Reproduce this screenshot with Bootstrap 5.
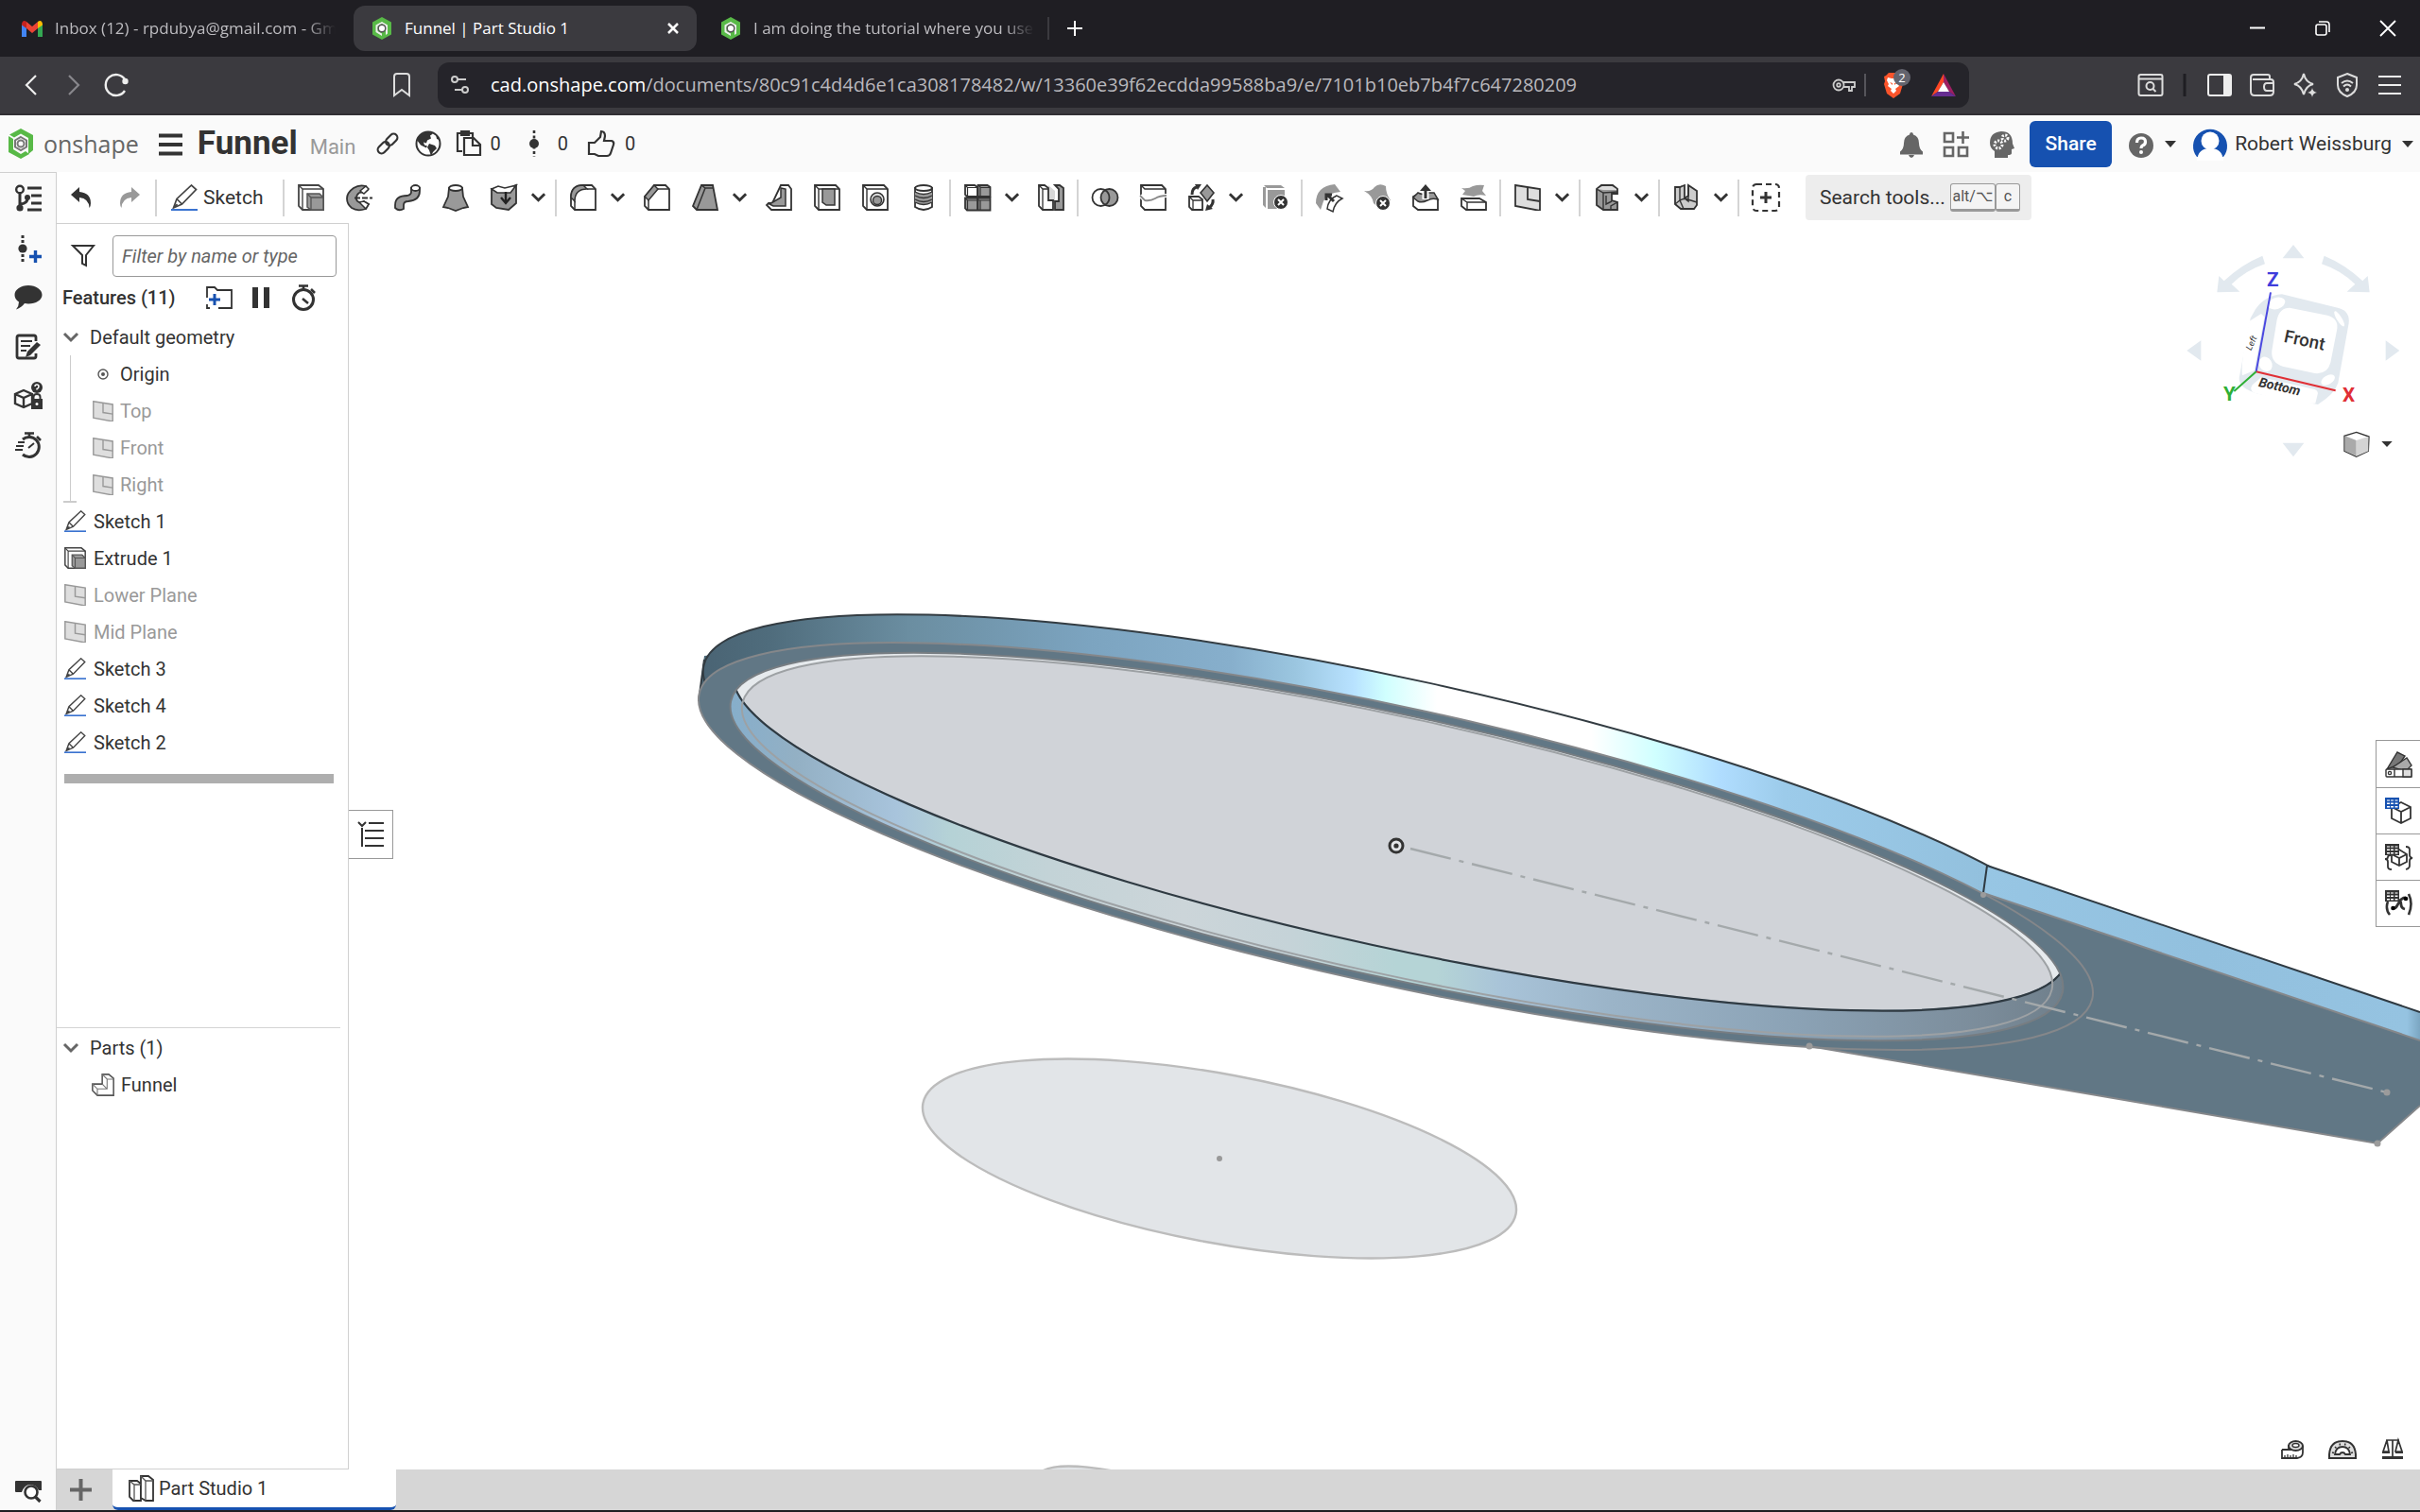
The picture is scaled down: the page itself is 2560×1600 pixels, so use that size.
<!DOCTYPE html>
<html lang="en">
<head>
<meta charset="utf-8">
<meta name="viewport" content="width=device-width, initial-scale=1">
<title>Funnel | Part Studio 1</title>
<link rel="stylesheet" href="https://cdn.jsdelivr.net/npm/bootstrap@5.3.0/dist/css/bootstrap.min.css">
<script src="https://cdn.jsdelivr.net/npm/bootstrap@5.3.0/dist/js/bootstrap.bundle.min.js"></script>
<style>
body{font-family:Roboto,"Liberation Sans",sans-serif;font-size:20px;line-height:24px;color:#333;background:#fff}
button{font:inherit;color:inherit;background:none;border:0;padding:0}
a{color:inherit;text-decoration:none}
svg{display:block;flex:none;overflow:visible}
.ic{width:28px;height:28px}
.hold{display:flex;align-items:center;justify-content:center;flex:none}
/* browser chrome */
.chrome-ui{font-family:"Open Sans","Noto Sans",sans-serif}
.tabstrip{height:60px;background:#1f1e23;color:#bdbcc0;font-size:17px;padding-left:22px}
.btab{height:48px;flex:none}
.btab.first{width:352px}
.btab.last{width:371px}
.btab.on{width:363px;background:#3b3a3f;border-radius:12px;color:#fff;padding:0 16px 0 18px}
.fade-end{width:297px;white-space:nowrap;overflow:hidden;-webkit-mask-image:linear-gradient(90deg,#000 calc(100% - 32px),transparent);mask-image:linear-gradient(90deg,#000 calc(100% - 32px),transparent)}
.fav{width:24px;height:24px}
.winctl{width:69px;height:60px}
.navrow{height:62px;background:#3b3a3f;color:#eee;border-bottom:2px solid #312f34;padding:0 10px}
.navgap{width:257px;flex:none}
.nbtn{width:45px;height:48px}
.urlbar{width:1620px;height:48px;background:#25242a;border-radius:12px;font-size:20px;color:#b9b8bd;padding:0 13px 0 12px}
.urlbar b{font-weight:400;color:#fff}
.vr1{width:2px;height:24px;flex:none;background:#55545a}
/* application header */
.apphead{height:60px;background:#fafafa}
.brand{font-family:"Open Sans",sans-serif;font-size:25px;color:#666;margin-left:9px}
.doc{font-size:35px;font-weight:700;line-height:40px}
.ws{font-size:22px;color:#999}
.share{width:87px;height:49px;background:#1651b0;color:#fff;border-radius:6px;font-weight:500;font-size:21px}
.tri{width:0;border:6px solid transparent;border-top:7px solid #333;border-bottom:0}
/* toolbar */
.toolrow{height:54px;font-size:21px}
.tb{width:51px;height:54px}
.cv{width:27px;height:54px;padding-right:4px!important}
.sp{width:6px;flex:none}
.sp::before{content:"";display:block;width:2px;height:39px;margin:0 auto;background:#d4d4d4}
.searchbox{width:239px;height:48px;background:#ededed;border-radius:4px;margin-left:17px;padding-left:15px;white-space:nowrap}
.keycap{display:block;width:26px;height:30px;border:1px solid #999;border-bottom-width:3px;border-radius:3px;font-family:Roboto,"DejaVu Sans",sans-serif;font-size:16px;line-height:26px;padding:0;background:#f4f4f4;color:#555;text-align:center}
.keycap.wide{width:48px;margin-left:5px}
/* side rail and feature panel */
.rail{width:60px;flex:none;background:#fafafa;border-top:1px solid #d0d0d0;border-right:1px solid #d0d0d0}
.rail button{height:52px;width:60px}
.rail button:first-child{height:54px}
.feat{width:309px;flex:none;background:#fff;border:1px solid #d0d0d0;border-left:0}
.filt{height:44px;width:237px;border:1px solid #999;border-radius:4px;padding:0 9px;color:#333;margin-left:19px}
.filt::placeholder{color:#666;font-style:italic;opacity:1}
.frow{height:39px;display:flex;align-items:center;width:100%;white-space:nowrap;padding-left:8px}
.frow.fold{padding-left:6px;gap:11px}
.frow.sub{padding-left:23px;gap:7px}
.off{color:#999}
.kids{margin-left:14px;border-left:1px solid #ccc;position:relative}
.kids::after{content:"";position:absolute;left:-8px;bottom:0;width:14px;height:2px;background:#ccc}
.rollback{height:10px;background:#aeaeae;margin:14px 15px 0 8px}
.parts{height:467px;flex:none;padding-top:2px}
.parts::before{content:"";display:block;height:1px;margin:-2px 8px 1px 0;background:#d4d4d4}
.stage{min-width:0;background:#fff}
.scene{width:100%;height:100%}
.listtab{left:0;top:621px;width:47px;height:52px;background:#fff;border:1px solid #999;border-left:0}
.cubebox{right:0;top:4px;width:320px;height:260px}
.sidebtns{right:0;top:547px;width:47px;border:1px solid #999;border-right:0;background:#fff}
.sidebtns button{height:49px;width:46px}
.sidebtns button+button{border-top:1px solid #999}
.measures{right:3px;bottom:3px}
.measures button{width:53px;height:36px}
.bottombar{height:43px;background:#d6d6d6}
.addtab{width:59px;padding-right:9px}
.ptab{width:300px;background:#fff;border-bottom:3px solid #1651b0;border-radius:0 0 6px 6px;padding-left:17px}
.edge{height:2px;background:#1f1e23}
</style>
</head>
<body class="d-flex flex-column vh-100 overflow-hidden">

<svg width="0" height="0" class="position-absolute" aria-hidden="true">
<defs>
<symbol id="logo" viewBox="0 0 30 32"><path fill="#58b947" d="M15 0 28 7v16l-5 4V10L15 5.500 8 9.500 3 6.500zM2 8l5 3v11l8 5 5-3 4 3-9 5L2 25z"/><path fill="none" stroke="#777" stroke-width="2" d="M15 9l6 3.500v7L15 23l-6-3.500v-7z"/><circle cx="15" cy="16" r="3.500" fill="none" stroke="#777" stroke-width="2"/></symbol>
<symbol id="fav" viewBox="0 0 24 24"><path fill="#58b947" d="M12 0 22 5.500v13L12 24 2 18.500v-13z"/><path fill="#eee" d="M12 5l6 3.500v9L16 19V9.500L12 7 7.500 9.500V15L12 17.500V20L5.500 16V8.500z"/><circle cx="12" cy="12" r="3.800" fill="#fff" stroke="#555" stroke-width="1.500"/></symbol>
<symbol id="chev" viewBox="0 0 18 12"><path d="M2 2l7 7 7-7" fill="none" stroke="currentColor" stroke-width="3"/></symbol>
<symbol id="pen" viewBox="0 0 28 28"><path d="M2.500 25L6 15.500 21.500 1l5 4.500L11.500 21zM6 15.500l5.500 5.500M2.500 25l4-4" fill="#fff" stroke="#444" stroke-width="1.700"/><path d="M0 27h28" stroke="#3a73d0" stroke-width="2"/></symbol>
<symbol id="plane" viewBox="0 0 28 28"><path d="M1 1l26 4v23L1 23z" fill="#dedede" stroke="currentColor" stroke-width="1.800"/><path d="M14 3v13l13 2" fill="none" stroke="currentColor" stroke-width="1.800"/></symbol>
<symbol id="extrude" viewBox="0 0 28 28"><path d="M1 1h21l5 4v22H5l-4-4z" fill="#fff" stroke="#444" stroke-width="1.800"/><path d="M1 1l4 4h22M5 5v22" fill="none" stroke="#444" stroke-width="1.400"/><path d="M10 10h13l4 4v13H14l-4-3z" fill="#999" stroke="#555" stroke-width="1.500"/><path d="M10 10l4 4h13M14 14v13" fill="none" stroke="#555" stroke-width="1.300"/></symbol>
<symbol id="xcirc" viewBox="0 0 16 16"><circle cx="8" cy="8" r="7.500" fill="#333" stroke="#fff" stroke-width="1"/><path d="M5 5l6 6M11 5l-6 6" stroke="#fff" stroke-width="2"/></symbol>
<symbol id="table" viewBox="0 0 15 12"><path d="M0 0h15v12H0z" fill="currentColor"/><path d="M2 2h3v2H2zM6 2h3v2H6zM10.500 2h3v2h-3z" fill="#fff" opacity=".55"/><path d="M2 5.500h3v1.500H2zM6 5.500h3v1.500H6zM10.500 5.500h3v1.500h-3zM2 9h3v1.500H2zM6 9h3v1.500H6zM10.500 9h3v1.500h-3z" fill="#fff"/></symbol>
</defs>
</svg>

<!-- browser tab strip -->
<header class="chrome-ui">
<nav class="tabstrip d-flex align-items-center" aria-label="Browser tabs">
  <a href="#" class="btab first d-flex align-items-center gap-2">
    <svg class="fav me-1" viewBox="0 0 24 24"><path fill="#4285f4" d="M1 21V7l5 4v10z"/><path fill="#34a853" d="M18 21V11l5-4v14z"/><path fill="#c5221f" d="M1 8c0-4 3-5 5-3v7L1 8.500z"/><path fill="#fbbc04" d="M23 8c0-4-3-5-5-3v7l5-3.500z"/><path fill="#ea4335" d="M6 5l6 5 6-5v7l-6 5-6-5z"/></svg>
    <span class="fade-end">Inbox (12) - rpdubya@gmail.com - Gmail</span></a>
  <a href="#" class="btab on d-flex align-items-center">
    <svg class="fav"><use href="#fav"/></svg><span class="flex-grow-1 ms-2 ps-1">Funnel | Part Studio 1</span>
    <button aria-label="Close tab"><svg width="18" height="18" viewBox="0 0 18 18"><path d="M4 4l10 10M14 4L4 14" stroke="#fff" stroke-width="2.500"/></svg></button></a>
  <a href="#" class="btab last d-flex align-items-center gap-2 ps-4">
    <svg class="fav me-1"><use href="#fav"/></svg><span class="fade-end">I am doing the tutorial where you used</span></a>
  <span class="vr1" style="background:#3b3a3f"></span>
  <button class="hold ms-3" aria-label="New tab"><svg width="22" height="16" viewBox="0 0 22 16"><path d="M11 0v16M3 8h16" stroke="#fff" stroke-width="2"/></svg></button>
  <span class="flex-grow-1"></span>
  <button class="winctl hold" aria-label="Minimize"><svg width="16" height="16" viewBox="0 0 16 16"><path d="M0 7.500h16" stroke="#fff" stroke-width="2"/></svg></button>
  <button class="winctl hold" aria-label="Restore"><svg width="16" height="16" viewBox="0 0 16 16"><rect x="1" y="4" width="11" height="11" rx="2" fill="none" stroke="#fff" stroke-width="1.600"/><path d="M4 1h8q3 0 3 3v8" fill="none" stroke="#fff" stroke-width="1.600"/></svg></button>
  <button class="winctl hold" aria-label="Close"><svg width="16" height="16" viewBox="0 0 16 16"><path d="M0 0l16 16M16 0L0 16" stroke="#fff" stroke-width="1.800"/></svg></button>
</nav>

<!-- navigation bar -->
<div class="navrow d-flex align-items-center">
  <div class="d-flex">
  <button class="nbtn hold" aria-label="Back"><svg width="14" height="22" viewBox="0 0 14 22"><path d="M12 1L2 11l10 10" fill="none" stroke="#eee" stroke-width="2.200"/></svg></button>
  <button class="nbtn hold" aria-label="Forward"><svg width="14" height="22" viewBox="0 0 14 22"><path d="M2 1l10 10L2 21" fill="none" stroke="#88878c" stroke-width="2.200"/></svg></button>
  <button class="nbtn hold" aria-label="Reload"><svg width="26" height="26" viewBox="0 0 26 26"><path d="M22 7A11 11 0 1 0 22 19" fill="none" stroke="#eee" stroke-width="2.400"/><circle cx="22.500" cy="9" r="3.200" fill="#eee"/></svg></button>
  </div>
  <span class="navgap"></span>
  <button class="nbtn hold me-3" aria-label="Bookmark"><svg width="20" height="26" viewBox="0 0 20 26"><path d="M2 4q0-3 3-3h10q3 0 3 3v20l-8-6-8 6z" fill="none" stroke="#ddd" stroke-width="2"/></svg></button>
  <div class="urlbar d-flex align-items-center">
    <svg width="24" height="24" viewBox="0 0 24 24"><g fill="none" stroke="#ccc" stroke-width="2"><circle cx="6" cy="6" r="3"/><path d="M9 6h9M6 17h8"/><circle cx="17" cy="17" r="3"/></g></svg>
    <span class="flex-grow-1 ms-3 ps-1"><b>cad.onshape.com</b>/documents/80c91c4d4d6e1ca308178482/w/13360e39f62ecdda99588ba9/e/7101b10eb7b4f7c647280209</span>
    <svg width="26" height="18" viewBox="0 0 26 18"><g fill="none" stroke="#ccc" stroke-width="1.800"><circle cx="7" cy="9" r="5.500"/><circle cx="7" cy="9" r="1.800"/><path d="M12 6h12v5h-3v4h-3v-4h-6"/></g></svg>
    <span class="vr1 ms-2 me-3"></span>
    <svg class="me-4" width="28" height="28" viewBox="0 0 28 28"><path fill="#fb542b" d="M8 1h10l3 3 2 1-1 5 1 3-3 10-7 5-7-5L3 13l1-3-1-5 2-1z"/><path fill="#fff" d="M7 6l4 1h4l4-1 1 3-2 4 1 2-4 3 1 2-3 3-3-3 1-2-4-3 1-2-2-4z"/><path fill="#fb542b" d="M9 11l3 1v2zM17 11l-3 1v2z"/><circle cx="22" cy="6" r="9" fill="#63646e"/><text x="22" y="11" font-size="13" fill="#fff" text-anchor="middle">2</text></svg>
    <svg width="28" height="24" viewBox="0 0 28 24"><path fill="#ff4724" d="M14 0v9L8 19 1 24z"/><path fill="#9e1f63" d="M14 0l13 24-7-5-6-10z"/><path fill="#662d91" d="M1 24l7-5h12l7 5z"/><path fill="#fff" d="M14 9l6 10H8z"/></svg>
  </div>
  <span class="flex-grow-1"></span>
  <div class="d-flex align-items-center">
  <button class="nbtn hold" aria-label="Search tabs"><svg class="ic" viewBox="0 0 28 28"><g fill="none" stroke="#ddd" stroke-width="2"><rect x="1.500" y="3" width="25" height="22" rx="2"/><path d="M2 7.500h24"/><circle cx="13.500" cy="15" r="4"/><path d="M16.500 18l3 3"/></g></svg></button>
  <svg width="28" height="24" viewBox="0 0 28 24"><path d="M14 0v24" stroke="#1f1e23" stroke-width="3"/></svg>
  <button class="nbtn hold" aria-label="Sidebar"><svg width="26" height="24" viewBox="0 0 26 24"><rect x="1" y="1" width="24" height="22" rx="2" fill="none" stroke="#eee" stroke-width="2"/><path fill="#eee" d="M17 1h8v22h-8z"/></svg></button>
  <button class="nbtn hold" aria-label="Wallet"><svg width="26" height="24" viewBox="0 0 26 24"><g fill="none" stroke="#ddd" stroke-width="2"><path d="M21 5V3q0-2-2-2H4Q1 1 1 4v15q0 4 4 4h16q4 0 4-4V9q0-3-3-3H3M25 10h-7q-3 0-3 4t3 4h7"/></g></svg></button>
  <button class="nbtn hold" aria-label="AI assistant"><svg width="26" height="26" viewBox="0 0 26 26"><path d="M12 1q2 9 10 11-8 2-10 11-2-9-10-11 8-2 10-11z" fill="none" stroke="#ddd" stroke-width="2"/><path d="M21 16q.5 4 5 5-4.500.5-5 5-.5-4.500-5-5 4.500-1 5-5z" fill="#ddd"/></svg></button>
  <button class="nbtn hold" aria-label="VPN"><svg width="24" height="28" viewBox="0 0 24 28"><g fill="none" stroke="#ddd" stroke-width="2"><path d="M12 2l10 4v8q0 8-10 12Q2 22 2 14V6z"/><path d="M6 12q6-5 12 0M8 15.500q4-4 8 0"/></g><circle cx="12" cy="19" r="2" fill="#ddd"/></svg></button>
  <button class="nbtn hold" aria-label="Menu"><svg width="24" height="20" viewBox="0 0 24 20"><path d="M0 1h24M0 10h24M0 19h24" stroke="#eee" stroke-width="2"/></svg></button>
  </div>
</div>
</header>

<!-- document header -->
<div class="apphead d-flex align-items-center flex-shrink-0">
  <a href="#" class="d-flex align-items-center" style="margin-left:7px"><svg width="30" height="32"><use href="#logo"/></svg><span class="brand">onshape</span></a>
  <button style="margin-left:21px" aria-label="Document menu"><svg width="25" height="24" viewBox="0 0 25 24"><path d="M0 3.500h25M0 13h25M0 22.500h25" stroke="#333" stroke-width="4"/></svg></button>
  <span class="d-flex align-items-baseline ms-3"><span class="doc">Funnel</span><span class="ws" style="margin-left:13px">Main</span></span>
  <button style="margin-left:21px" aria-label="Link"><svg width="26" height="26" viewBox="0 0 26 26"><g fill="none" stroke="#333" stroke-width="2.200" transform="rotate(-45 13 13)"><rect x="0" y="9" width="14" height="8" rx="4"/><rect x="12" y="9" width="14" height="8" rx="4"/></g></svg></button>
  <button class="ms-3" aria-label="Public"><svg class="ic" viewBox="0 0 28 28"><circle cx="14" cy="14" r="12.500" fill="#fff" stroke="#333" stroke-width="2"/><path fill="#333" d="M3 8Q8 1 15 1.500l4 2-3 2 1 3-4 2-1 3-3-1 1 3 3 1-1 2-6-3-3-4zM15 14l6 2 2 3-4 4-2 4-2-6-2-3zM22 4l4 6-3-1z"/></svg></button>
  <button class="d-flex align-items-center" style="margin-left:15px" aria-label="Copies 0"><svg class="ic" viewBox="0 0 28 28"><g fill="none" stroke="#333" stroke-width="2.200"><path d="M7 22H2V3h16v4M6 1h8v4H6z"/><path d="M9 8h10l7 7v11H9zM18 8v8h8" fill="#fafafa"/></g></svg><span class="ms-2">0</span></button>
  <button class="d-flex align-items-center" style="margin-left:21px" aria-label="Versions 0"><svg class="ic" viewBox="0 0 28 28"><path d="M14 0v28" stroke="#333" stroke-width="2.600" stroke-dasharray="3 2.500"/><circle cx="14" cy="14" r="5" fill="#333"/></svg><span style="margin-left:11px">0</span></button>
  <button class="d-flex align-items-center" style="margin-left:21px" aria-label="Likes 0"><svg class="ic" viewBox="0 0 28 28"><path d="M1 13h6l6-6 1-6q4 0 4 5l-1 5h8q3 1 2 4l-3 9q-1 3-4 3h-9l-4-2H1z" fill="none" stroke="#333" stroke-width="2.200"/></svg><span style="margin-left:11px">0</span></button>
  <span class="flex-grow-1"></span>
  <button class="hold" style="width:47px" aria-label="Notifications"><svg class="ic" viewBox="0 0 28 28"><path fill="#666" d="M14 2q2 0 2 2.500 6 2 6 9 0 6 4 9v3H2v-3q4-3 4-9 0-7 6-9Q12 2 14 2zM11 26h6q-1 3-3 3t-3-3z"/></svg></button>
  <button class="hold" style="width:48px" aria-label="Apps"><svg width="28" height="30" viewBox="0 -2 28 30"><g fill="none" stroke="#666" stroke-width="2.600"><path d="M2 2h9v9H2zM2 17h9v9H2zM17 17h9v9h-9zM21.500 0v13M15 6.500h13"/></g></svg></button>
  <button class="hold" style="width:48px" aria-label="Learning"><svg width="28" height="30" viewBox="0 -2 28 30"><path fill="#666" d="M14 0q12 0 12 13l2 5-3 1v4q0 2-4 2v3H7v-7Q2 18 2 12 2 1 14 0z"/><g fill="none" stroke="#fafafa" stroke-width="3" stroke-dasharray="2 1.500"><circle cx="11" cy="14" r="4"/><circle cx="18" cy="7" r="3"/></g></svg></button>
  <button class="share" style="margin-left:6px">Share</button>
  <button class="d-flex align-items-center" style="margin-left:17px" aria-label="Help"><svg class="ic" viewBox="0 0 28 28"><circle cx="14" cy="16" r="13" fill="#666"/><path d="M9.500 13q0-5 4.500-5t4.500 4q0 3-3 4-1.500.7-1.500 3" fill="none" stroke="#fff" stroke-width="3.200"/><circle cx="14" cy="23" r="2" fill="#fff"/></svg><span class="tri" style="margin-left:11px"></span></button>
  <button class="d-flex align-items-center" style="margin-left:18px"><svg width="36" height="36" viewBox="0 0 36 36"><path fill="#1651b0" d="M4 32A18 18 0 1 1 32 32z"/><circle cx="18" cy="15" r="9.500" fill="#fff"/><path fill="#fff" d="M4 36q1-13 14-13t14 13z"/></svg><span class="ms-2" style="font-size:21px">Robert Weissburg</span><span class="tri" style="margin:0 7px 0 11px"></span></button>
</div>

<div class="d-flex flex-grow-1" style="min-height:0">
<!-- left rail -->
<nav class="rail d-flex flex-column" aria-label="Panels">
  <button class="hold" aria-label="Feature list"><svg class="ic" viewBox="0 0 28 28"><g fill="none" stroke="#333"><circle cx="5" cy="4.500" r="3.800" stroke-width="2.400"/><path d="M5 9v12M6 20q7-1 7-6" stroke-width="3"/><path d="M13 3h15M17 11h11M17 19h11M13 26h15" stroke-width="3"/></g><circle cx="5" cy="24" r="3.600" fill="#333"/><circle cx="13" cy="13" r="3" fill="#333"/></svg></button>
  <button class="hold" aria-label="Create version"><svg class="ic" viewBox="0 0 28 28"><path d="M8 0v28" stroke="#333" stroke-width="3" stroke-dasharray="3 2"/><circle cx="8" cy="14" r="4.600" fill="#333"/><path d="M21.500 16v13M15 22.500h13" stroke="#1651b0" stroke-width="3.400"/></svg></button>
  <button class="hold" aria-label="Comments"><svg class="ic" viewBox="0 0 28 28"><path fill="#333" d="M14 1c8 0 14.500 4.500 14.500 10S22 20.500 14 20.500l-4-.5Q7 24 1 26.500 4 23 4 18.500-.5 16-.5 11C-.5 5.500 6 1 14 1z"/></svg></button>
  <button class="hold" aria-label="Notes"><svg class="ic" viewBox="0 0 28 28"><g fill="none" stroke="#333"><path d="M22 8V4q0-2-2-2H4Q2 2 2 4v20q0 2 2 2h16q2 0 2-2v-3" stroke-width="2.800"/><path d="M6 8h12M6 13h10M6 18h6" stroke-width="2.200"/></g><path fill="#333" d="M23 9l4 3-11 11-5 2 2-6z"/></svg></button>
  <button class="hold" aria-label="Properties"><svg width="30" height="30" viewBox="0 0 30 30"><path d="M10 9l9 4v10l-9 4-9-4V13zM1 13l9 4 9-4M10 17v10" fill="none" stroke="#333" stroke-width="2.400"/><circle cx="24" cy="6" r="6" fill="#333"/><path d="M22 5q0-2 2-2t2 2-2 2.500v1" stroke="#fff" stroke-width="1.500" fill="none"/><path d="M18 18h12v11H18z" fill="#333"/><path d="M20.500 18v-2q0-3 3.500-3t3.500 3v2" fill="none" stroke="#333" stroke-width="2"/><circle cx="24" cy="23.500" r="1.500" fill="#fff"/></svg></button>
  <button class="hold" aria-label="Performance"><svg class="ic" viewBox="0 0 28 28"><path d="M8 8A10.500 10.500 0 1 1 8 24" fill="none" stroke="#333" stroke-width="3"/><path d="M10 1.500h10M15 2v4M23 5l4 4" stroke="#333" stroke-width="2.600"/><path d="M3 11h7M1 15h8M0 19h8M14 17l6-5" stroke="#333" stroke-width="2"/></svg></button>
  <span class="flex-grow-1"></span>
  <button class="hold" style="height:40px" aria-label="Search"><svg width="28" height="24" viewBox="0 0 28 24"><path fill="#333" d="M1 1h26q1 0 1 1v9h-3q-3-6-9-6t-9 8H1q-1 0-1-1V2q0-1 1-1z"/><circle cx="17" cy="13" r="6.500" fill="#fff" stroke="#333" stroke-width="2.600"/><path d="M21.500 18l5 5" stroke="#333" stroke-width="3.200"/></svg></button>
</nav>

<div class="d-flex flex-column flex-grow-1" style="min-width:0">
<!-- feature toolbar -->
<div class="toolrow d-flex align-items-center flex-shrink-0" role="toolbar">
  <button class="tb hold" aria-label="Undo"><svg width="22" height="24" viewBox="0 0 22 24"><path fill="#333" d="M0 9l9-8v5q12 1 12 12 0 3-1.500 5Q19 13 9 12v5z"/></svg></button>
  <button class="tb hold" aria-label="Redo"><svg width="22" height="24" viewBox="0 0 22 24"><path fill="#999" d="M22 9l-9-8v5Q1 7 1 18q0 3 1.500 5Q3 13 13 12v5z"/></svg></button>
  <span class="sp"></span>
  <button class="d-flex align-items-center flex-shrink-0" style="width:129px;padding-left:13px"><svg class="ic"><use href="#pen"/></svg><span style="margin-left:6px">Sketch</span></button>
  <span class="sp"></span>
  <button class="tb hold" aria-label="Extrude"><svg class="ic"><use href="#extrude"/></svg></button>
  <button class="tb hold" aria-label="Revolve"><svg class="ic" viewBox="0 0 28 28"><path d="M21 2Q14 0 8 4 1 9 1 15q0 6 5 10 6 4 15 1l3-5-5-3q-3 2-5 1-3-1-3-4 0-4 3-6 3-1 5 0l4-3z" fill="#999" stroke="#333" stroke-width="1.800"/><path d="M15 7l6-5 3 3-5 5zM14 19l5-1 5 3-3 5z" fill="#fff" stroke="#333" stroke-width="1.500"/><path d="M9 14.500h19" stroke="#333" stroke-width="2" stroke-dasharray="6 2"/></svg></button>
  <button class="tb hold" aria-label="Sweep"><svg class="ic" viewBox="0 0 28 28"><path d="M18 4v4q0 3-4 4Q1 12 1 22v3q4 4 9 1v-4q0-4 5-4 12-1 12-11V4z" fill="#999" stroke="#333" stroke-width="1.800"/><ellipse cx="22.500" cy="4" rx="4.500" ry="3" fill="#fff" stroke="#333" stroke-width="1.800"/></svg></button>
  <button class="tb hold" aria-label="Loft"><svg class="ic" viewBox="0 0 28 28"><path d="M7 4l-1 9-5 11 5 1 8 3 8-3 5-1-5-11-1-9z" fill="#999" stroke="#333" stroke-width="1.800"/><ellipse cx="14" cy="4" rx="7" ry="3" fill="#fff" stroke="#333" stroke-width="1.800"/></svg></button>
  <button class="tb hold" aria-label="Thicken"><svg class="ic" viewBox="0 0 28 28"><path d="M1 5l11 3 15-7v19l-8 7-13-2-5-4z" fill="#999" stroke="#333" stroke-width="1.800"/><path d="M1 5l7-3 7 2 12-3-6 8H7z" fill="#fff" stroke="#333" stroke-width="1.600"/><path d="M16 8v11M11 14l5 6 5-6" stroke="#222" stroke-width="2.400" fill="none"/></svg></button>
  <button class="cv hold" aria-label="More create tools"><svg width="17" height="12"><use href="#chev"/></svg></button>
  <span class="sp"></span>
  <button class="tb hold" aria-label="Fillet"><svg class="ic" viewBox="0 0 28 28"><path d="M1 14Q1 1 14 1h9l4 4v22H5l-4-4z" fill="#fff" stroke="#333" stroke-width="1.800"/><path d="M1 14Q1 1 14 1l4 4Q5 5 5 18z" fill="#999" stroke="#333" stroke-width="1.500"/><path d="M5 18v9M18 5h9" stroke="#333" stroke-width="1.500"/></svg></button>
  <button class="cv hold" aria-label="More fillets"><svg width="17" height="12"><use href="#chev"/></svg></button>
  <button class="tb hold" aria-label="Chamfer"><svg class="ic" viewBox="0 0 28 28"><path d="M1 13L11 1h12l4 4v22H5l-4-4z" fill="#fff" stroke="#333" stroke-width="1.800"/><path d="M1 13L11 1l4 4L5 17z" fill="#999" stroke="#333" stroke-width="1.500"/><path d="M5 17v10M15 5h12" stroke="#333" stroke-width="1.500"/></svg></button>
  <button class="tb hold" aria-label="Draft"><svg class="ic" viewBox="0 0 28 28"><path d="M1 23L10 1h12l5 26H5z" fill="#999" stroke="#333" stroke-width="1.800"/><path d="M10 1l4 3h9M14 4L5 27" fill="none" stroke="#333" stroke-width="1.500"/></svg></button>
  <button class="cv hold" aria-label="More drafts"><svg width="17" height="12"><use href="#chev"/></svg></button>
  <button class="tb hold" aria-label="Rib"><svg class="ic" viewBox="0 0 28 28"><path d="M16 1h8l3 4v22H6l-5-5 2-2h4z" fill="#fff" stroke="#333" stroke-width="1.800"/><path d="M16 4v10L4 21l4 2h13V5z" fill="#999" stroke="#333" stroke-width="1.500"/></svg></button>
  <button class="tb hold" aria-label="Shell"><svg class="ic" viewBox="0 0 28 28"><path d="M1 1h22l4 4v22H5l-4-4z" fill="#fff" stroke="#333" stroke-width="1.800"/><path d="M1 1l4 4h22M5 5v22" fill="none" stroke="#333" stroke-width="1.400"/><path d="M9 5h13v17H13l-4-3z" fill="#999" stroke="#333" stroke-width="1.500"/></svg></button>
  <button class="tb hold" aria-label="Hole"><svg class="ic" viewBox="0 0 28 28"><path d="M1 1h22l4 4v22H5l-4-4z" fill="#fff" stroke="#333" stroke-width="1.800"/><path d="M1 1l4 4h22M5 5v22" fill="none" stroke="#333" stroke-width="1.400"/><circle cx="16" cy="16" r="7" fill="#ddd" stroke="#333" stroke-width="1.600"/><circle cx="16" cy="17" r="4.500" fill="#999" stroke="#333" stroke-width="1.400"/></svg></button>
  <button class="tb hold" aria-label="Thread"><svg class="ic" viewBox="0 0 28 28"><path d="M5 4v20q9 6 18 0V4z" fill="#fff" stroke="#333" stroke-width="1.800"/><path d="M5 8v11q9 5 18 0V8q-9 5-18 0z" fill="#999"/><path d="M5 8q9 5 18 0M5 12q9 5 18 0M5 16q9 5 18 0M5 19q9 5 18 0" fill="none" stroke="#333" stroke-width="1.400"/><ellipse cx="14" cy="4" rx="9" ry="3" fill="#fff" stroke="#333" stroke-width="1.800"/></svg></button>
  <span class="sp"></span>
  <button class="tb hold" aria-label="Linear pattern"><svg class="ic" viewBox="0 0 28 28"><g stroke="#333" stroke-width="1.800"><path d="M1 1h10l3 2v10H3l-2-2z" fill="#fff"/><path d="M14.500 1h10l3 2v10h-13z" fill="#999"/><path d="M1 14.500h13v13H3l-2-2zM14.500 14.500h13v13h-13z" fill="#999"/><path d="M1 1l2.500 2.500H14M3.500 3.500V13M15 1l2.500 2.500h10M17 3.500V13M3.500 17v10M1 15l2.500 2h24M17 17v10" fill="none" stroke-width="1.200"/></g></svg></button>
  <button class="cv hold" aria-label="More patterns"><svg width="17" height="12"><use href="#chev"/></svg></button>
  <button class="tb hold" aria-label="Mirror"><svg class="ic" viewBox="0 0 28 28"><path d="M11 1l7 6v14l-7-5z" fill="#d8d8d8"/><path d="M1 1h6l4 3v13h5v10H5l-4-4z" fill="#fff" stroke="#333" stroke-width="1.800"/><path d="M1 1l4 4h6M5 5v22" fill="none" stroke="#333" stroke-width="1.300"/><path d="M18 1h5l4 3v23h-9v-9h4V5z" fill="#999" stroke="#333" stroke-width="1.800"/></svg></button>
  <span class="sp"></span>
  <button class="tb hold" aria-label="Boolean"><svg class="ic" viewBox="0 0 28 28"><g stroke="#333" stroke-width="1.800"><circle cx="9.500" cy="14" r="9" fill="#fff"/><circle cx="18.500" cy="14" r="9" fill="#999"/><path d="M14 6.200a9 9 0 0 1 0 15.600" fill="none"/></g></svg></button>
  <button class="tb hold" aria-label="Split"><svg class="ic" viewBox="0 0 28 28"><path d="M1 1h22l4 4v22H5l-4-4z" fill="#fff" stroke="#333" stroke-width="1.800"/><path d="M1 1l4 4h22" fill="none" stroke="#333" stroke-width="1.400"/><path d="M0 12l5 5q6 1 11-2 5-3 12-3" fill="none" stroke="#fff" stroke-width="4"/><path d="M0 12l5 5q6 1 11-2 5-3 12-3" fill="none" stroke="#888" stroke-width="1.800"/></svg></button>
  <button class="tb hold" aria-label="Transform"><svg class="ic" viewBox="0 0 28 28"><path d="M1 13h10l4 3v11H4l-3-3z" fill="#fff" stroke="#333" stroke-width="1.800"/><path d="M1 13l4 4h10M5 17v10" fill="none" stroke="#333" stroke-width="1.300"/><path d="M20 1l7 8-7 9-7-9z" fill="#999" stroke="#333" stroke-width="1.600"/><path d="M4 11q0-7 5-8" fill="none" stroke="#333" stroke-width="3"/><path d="M7 0h7l-4 6zM18 28l2-7 6 5z" fill="#333"/><path d="M26 16q1 5-4 9" fill="none" stroke="#333" stroke-width="3"/></svg></button>
  <button class="cv hold" aria-label="More transforms"><svg width="17" height="12"><use href="#chev"/></svg></button>
  <button class="tb hold" aria-label="Delete part"><svg class="ic" viewBox="0 0 28 28"><path fill="#999" d="M1 3h3v22l-3-3zM2 1h18l4 3H5zM6 6h18v20H6z"/><use href="#xcirc" x="12" y="11" width="16" height="16"/></svg></button>
  <span class="sp"></span>
  <button class="tb hold" aria-label="Modify fillet"><svg class="ic" viewBox="0 0 28 28"><path fill="#999" d="M0 20Q0 2 20 0l6 8Q12 9 8 18l-3 9z"/><path d="M12 26q1-10 10-14l6 3q-8 4-10 14z" fill="#fff" stroke="#333" stroke-width="1.500"/><path d="M19 18l-6-6M11 17v-6h6" fill="none" stroke="#333" stroke-width="3"/></svg></button>
  <button class="tb hold" aria-label="Delete face"><svg class="ic" viewBox="0 0 28 28"><path fill="#999" d="M0 7q8 1 11-4 5-5 12-1 0 8 5 15l-9 4q-5 4-9-1Q9 12 0 7z"/><use href="#xcirc" x="12" y="12" width="16" height="16"/></svg></button>
  <button class="tb hold" aria-label="Move face"><svg class="ic" viewBox="0 0 28 28"><path d="M1 13l4-2h18l4 5v11H6l-5-4z" fill="#fff" stroke="#333" stroke-width="1.800"/><path d="M1 14l5-5q6 3 11 0h6l4 7q-6-2-11 1-6 3-10 1z" fill="#999" stroke="#333" stroke-width="1.500"/><path d="M14 16V5" stroke="#fff" stroke-width="7"/><path d="M14 15V6" stroke="#333" stroke-width="3"/><path d="M8 7l6-7 6 7z" fill="#333"/></svg></button>
  <button class="tb hold" aria-label="Replace face"><svg class="ic" viewBox="0 0 28 28"><path d="M1 15h19l7 4v8H6l-5-4z" fill="#fff" stroke="#333" stroke-width="1.800"/><path d="M1 15l6 4h20M7 19v8" fill="none" stroke="#333" stroke-width="1.400"/><path fill="#999" d="M1 4q8 1 12-2 6-2 12-1l-2 6 4 5q-8-2-13 1l-12-2 3-4z"/></svg></button>
  <span class="sp"></span>
  <button class="tb hold" aria-label="Plane"><svg class="ic"><use href="#plane"/></svg></button>
  <button class="cv hold" aria-label="More references"><svg width="17" height="12"><use href="#chev"/></svg></button>
  <span class="sp"></span>
  <button class="tb hold" aria-label="Frame"><svg class="ic" viewBox="0 0 28 28"><path d="M3 5l5-4h12l5 4v5h-6v7l6 2v8H10l-7-5z" fill="#999" stroke="#333" stroke-width="1.800"/><path fill="#ddd" d="M4 5l5-3h10l5 3v1H10z"/><path d="M3 5l7 4 15-1M10 9v17M25 19l-7 4v4M13 12v9l6-3" fill="none" stroke="#333" stroke-width="1.400"/></svg></button>
  <button class="cv hold" aria-label="More frames"><svg width="17" height="12"><use href="#chev"/></svg></button>
  <span class="sp"></span>
  <button class="tb hold" aria-label="Sheet metal"><svg class="ic" viewBox="0 0 28 28"><path d="M2 3h5l5-2v14l4-3V1l9 6v15l-3 4H8l-6-5z" fill="#ccc" stroke="#333" stroke-width="1.800"/><path d="M7 3v14l-5 4M7 17l5-2 4 3h0V1M7 17l4 9M12 15l13 4" fill="none" stroke="#333" stroke-width="1.400"/></svg></button>
  <button class="cv hold" aria-label="More sheet metal"><svg width="17" height="12"><use href="#chev"/></svg></button>
  <span class="sp"></span>
  <button class="tb hold" aria-label="Add tool"><svg width="32" height="32" viewBox="0 0 32 32"><rect x="2" y="2" width="28" height="28" rx="4" fill="none" stroke="#333" stroke-width="2.200" stroke-dasharray="6 4"/><path d="M16 10v12M10 16h12" stroke="#333" stroke-width="3"/></svg></button>
  <button class="searchbox d-flex align-items-center flex-shrink-0"><span>Search tools...</span><kbd class="keycap wide">alt/⌥</kbd><kbd class="keycap">c</kbd></button>
</div>

<div class="d-flex flex-grow-1" style="min-height:0">
<!-- feature list -->
<aside class="feat d-flex flex-column">
  <div class="d-flex align-items-center" style="padding:12px 0 2px 16px">
    <label for="filter" aria-label="Filter"><svg width="24" height="24" viewBox="0 0 24 24"><path d="M1 1h22l-8 10v11l-4-2v-9z" fill="#fff" stroke="#333" stroke-width="2"/></svg></label>
    <input id="filter" class="filt" placeholder="Filter by name or type">
  </div>
  <div class="d-flex align-items-center" style="height:42px;padding:0 0 2px 6px">
    <strong style="font-weight:500;width:152px">Features (11)</strong>
    <button class="me-3" aria-label="New folder"><svg class="ic" viewBox="0 0 28 28"><path d="M1 14V3h8l3 3h15v19H13M1 21v4h3" fill="none" stroke="#333" stroke-width="1.800"/><path d="M9 10v12M3 16h12" stroke="#1651b0" stroke-width="3"/></svg></button>
    <button class="hold" style="width:28px" aria-label="Suspend"><svg width="18" height="22" viewBox="0 0 18 22"><path fill="#333" d="M0 0h6v22H0zM12 0h6v22h-6z"/></svg></button>
    <button style="margin-left:17px" aria-label="Timing"><svg class="ic" viewBox="0 0 28 28"><circle cx="14" cy="16" r="10.500" fill="none" stroke="#333" stroke-width="3"/><path d="M9 1.500h10M14 2v4M22 5l4 4M13 15l6 5" stroke="#333" stroke-width="2.600"/></svg></button>
  </div>
  <button class="frow fold"><svg width="18" height="12" color="#666"><use href="#chev"/></svg><span>Default geometry</span></button>
  <div class="kids">
    <div class="frow sub"><svg width="22" height="22" viewBox="0 0 22 22"><circle cx="11" cy="11" r="5" fill="none" stroke="#555" stroke-width="1.400"/><circle cx="11" cy="11" r="2" fill="#555"/></svg><span>Origin</span></div>
    <div class="frow sub off"><svg width="22" height="22"><use href="#plane"/></svg><span>Top</span></div>
    <div class="frow sub off"><svg width="22" height="22"><use href="#plane"/></svg><span>Front</span></div>
    <div class="frow sub off"><svg width="22" height="22"><use href="#plane"/></svg><span>Right</span></div>
  </div>
  <div class="frow"><svg width="23" height="23"><use href="#pen"/></svg><span class="ms-2">Sketch 1</span></div>
  <div class="frow"><svg width="23" height="23"><use href="#extrude"/></svg><span class="ms-2">Extrude 1</span></div>
  <div class="frow off"><svg width="23" height="23"><use href="#plane"/></svg><span class="ms-2">Lower Plane</span></div>
  <div class="frow off"><svg width="23" height="23"><use href="#plane"/></svg><span class="ms-2">Mid Plane</span></div>
  <div class="frow"><svg width="23" height="23"><use href="#pen"/></svg><span class="ms-2">Sketch 3</span></div>
  <div class="frow"><svg width="23" height="23"><use href="#pen"/></svg><span class="ms-2">Sketch 4</span></div>
  <div class="frow"><svg width="23" height="23"><use href="#pen"/></svg><span class="ms-2">Sketch 2</span></div>
  <div class="rollback"></div>
  <span class="flex-grow-1"></span>
  <section class="parts">
    <button class="frow fold"><svg width="18" height="12" color="#666"><use href="#chev"/></svg><span>Parts (1)</span></button>
    <div class="frow" style="padding-left:37px"><svg width="24" height="24" viewBox="0 0 28 28"><path d="M1 13h12V1h8l6 5v21H7l-6-6z" fill="#fff" stroke="#555" stroke-width="1.800"/><path d="M13 1l6 6h8M1 13l6 6h12V7M7 19v8M13 13l6 6" fill="none" stroke="#777" stroke-width="1.300"/></svg><span style="margin-left:7px">Funnel</span></div>
  </section>
</aside>

<!-- graphics area -->
<main class="stage position-relative flex-grow-1 overflow-hidden">
<svg class="scene" viewBox="369 236 2191 1319" preserveAspectRatio="xMinYMin slice">
  <defs>
    <linearGradient id="band" gradientUnits="userSpaceOnUse" x1="745" y1="0" x2="2105" y2="0">
      <stop offset="0" stop-color="#4a6474"/><stop offset=".05" stop-color="#4f6c7c"/><stop offset=".16" stop-color="#6b8ea1"/><stop offset=".3" stop-color="#7ca4c0"/><stop offset=".41" stop-color="#87afcc"/><stop offset=".46" stop-color="#9bc6e0"/><stop offset=".505" stop-color="#b8e2ff"/><stop offset=".53" stop-color="#d0fffe"/><stop offset=".57" stop-color="#fff"/><stop offset=".69" stop-color="#fff"/><stop offset=".74" stop-color="#d0ffff"/><stop offset=".79" stop-color="#b0ddff"/><stop offset=".84" stop-color="#9ccbea"/><stop offset="1" stop-color="#92c0dd"/>
    </linearGradient>
    <linearGradient id="wall" gradientUnits="userSpaceOnUse" x1="772" y1="0" x2="2183" y2="0">
      <stop offset="0" stop-color="#86aecb"/><stop offset=".05" stop-color="#93b0c4"/><stop offset=".125" stop-color="#a8c4dc"/><stop offset=".165" stop-color="#b5d2d6"/><stop offset=".24" stop-color="#c3d3d7"/><stop offset=".34" stop-color="#ccd5d9"/><stop offset=".42" stop-color="#c5d3d8"/><stop offset=".5" stop-color="#b5d4d6"/><stop offset=".53" stop-color="#b5d4d6"/><stop offset=".58" stop-color="#a8c3d8"/><stop offset=".66" stop-color="#9bb4c8"/><stop offset=".8" stop-color="#8ba2b5"/><stop offset=".94" stop-color="#7b8c9a"/><stop offset="1" stop-color="#6f7f8b"/>
    </linearGradient>
    <linearGradient id="tip" gradientUnits="userSpaceOnUse" x1="2102" y1="0" x2="2560" y2="0"><stop offset="0" stop-color="#97c6e4"/><stop offset=".5" stop-color="#92c0de"/><stop offset=".97" stop-color="#95c3e1"/><stop offset="1" stop-color="#7ba6c2"/></linearGradient>
    <clipPath id="hole"><ellipse rx="721" ry="138.500" transform="translate(1477.500 896) rotate(12.350)"/></clipPath>
  </defs>
  <path d="M739 740L745 694 790 690 790 760z" fill="#4f6c7c"/>
  <path d="M744.400 704.200a754 146 12.350 0 1 1473.200 322.600a754 146 12.350 0 1-1473.200-322.600z" fill="url(#band)" stroke="#333c42" stroke-width="2"/>
  <path d="M739 742L745 698" stroke="#333c42" stroke-width="2"/>
  <path d="M2098 945L2560 1101V1170L2515 1210 1914 1107z" fill="#617785"/>
  <ellipse rx="754.300" ry="146.200" transform="translate(1476.500 895.500) rotate(12.350)" fill="#617785"/>
  <path d="M2102 916L2560 1071V1101L2098 945z" fill="url(#tip)"/>
  <path d="M2102 916L2560 1071M2102 916L2098 945" stroke="#2f3a42" stroke-width="2"/>
  <path d="M2098 945L2560 1101M1914 1107L2515 1210 2560 1170" fill="none" stroke="#85878a" stroke-width="2"/>
  <ellipse rx="754.300" ry="146.200" transform="translate(1476.500 895.500) rotate(12.350)" fill="none" stroke="#85878a" stroke-width="2"/>
  <g clip-path="url(#hole)">
    <path d="M700 600h1600v600H700z" fill="#e6eaed"/>
    <ellipse rx="709" ry="135.500" transform="translate(1478 895.500) rotate(12.350)" fill="#d0d3d8"/>
    <path fill="url(#wall)" fill-rule="evenodd" d="M700 600h1600v600H700zM776.200 710.300a721 138.500 12.350 0 1 1408.600 308.400a721 138.500 12.350 0 1-1408.600-308.400z"/>
    <ellipse rx="721" ry="138.500" transform="translate(1480.500 864.500) rotate(12.350)" fill="none" stroke="#2f3a42" stroke-width="2.200"/>
  </g>
  <ellipse rx="709" ry="135.500" transform="translate(1478 895.500) rotate(12.350)" fill="none" stroke="#9da1a4" stroke-width="2"/>
  <ellipse rx="721" ry="138.500" transform="translate(1477.500 896) rotate(12.350)" fill="none" stroke="#777d82" stroke-width="2"/>
  <path d="M1492 898L2525 1156" stroke="#a4a9ab" stroke-width="2.400" stroke-dasharray="44 9 5 9" fill="none"/>
  <g fill="#9b9b9b"><circle cx="2525" cy="1156" r="3.500"/><circle cx="2515" cy="1210" r="3.500"/><circle cx="1914" cy="1107" r="3.500"/><circle cx="2098" cy="947" r="3"/></g>
  <circle cx="1477" cy="895" r="7" fill="#e3e5e8" stroke="#333" stroke-width="3"/><circle cx="1477" cy="895" r="2.600" fill="#333"/>
  <ellipse rx="319" ry="89.300" transform="translate(1290 1226) rotate(10.560)" fill="#e2e5e8" stroke="#bcbcbc" stroke-width="2.400"/>
  <circle cx="1290" cy="1226" r="3" fill="#999"/>
  <path d="M1102 1557Q1120 1546 1180 1557z" fill="#e2e5e8" stroke="#bcbcbc" stroke-width="2.400"/>
</svg>

<button class="listtab position-absolute hold" aria-label="Toggle list"><svg class="ic" viewBox="0 0 28 28"><path d="M1 1l4 4 4-4M5 7v20" fill="none" stroke="#333" stroke-width="2"/><path d="M12 2h16M8 10h20M8 18h20M8 26h20" stroke="#333" stroke-width="2"/></svg></button>

<div class="cubebox position-absolute">
<svg width="320" height="260" viewBox="0 0 960 780">
  <g fill="#e2e9ef"><path d="M558 57l34 43h-68zM220 393l45-32v64zM895 393l-44-32v64zM558 730l34-44h-68z"/>
  <path d="M460 92l8 26q-60 20-106 64l26 24-72 2 6-52 16 16q54-52 122-80z"/><path d="M656 92l-8 26q60 20 106 64l-26 24 72 2-6-52-16 16q-54-52-122-80z"/>
  <path d="M438 262q30-44 84-48l180 44q36 10 32 48l-34 190q-10 34-64 68l-190-34q-60-16-60-50l36-190z"/></g>
  <g fill="#fff"><path d="M546 257l120 24q38 10 30 48l-20 102q-10 38-50 34l-102-22q-38-12-34-50l16-98q8-38 40-38z"/><path d="M418 300l38-24 10 10-32 170-38 16q-6-40 22-172zM456 478l170 38q14 6 8 20l-6 24-50 2-142-34q-20-8-8-26z"/>
  <ellipse cx="505" cy="243" rx="28" ry="18" transform="rotate(-18 505 243)"/><ellipse cx="470" cy="436" rx="20" ry="24" transform="rotate(-30 470 436)"/><ellipse cx="668" cy="486" rx="24" ry="14" transform="rotate(-30 668 486)"/><ellipse cx="704" cy="292" rx="8" ry="28" transform="rotate(-32 704 292)"/></g>
  <g font-family="Roboto,sans-serif" fill="#333"><text x="526" y="365" font-size="56" font-weight="500" transform="rotate(12 526 365)">Front</text><text x="446" y="506" font-size="42" font-style="italic" font-weight="700" transform="rotate(13 446 506)">Bottom</text><text x="424" y="394" font-size="28" font-style="italic" transform="rotate(-66 424 394)">Left</text></g>
  <path d="M440 460L486 208" stroke="#4a48e0" stroke-width="6"/><path d="M440 460L692 520" stroke="#e02f35" stroke-width="6"/><path d="M440 460L370 522" stroke="#2eaf35" stroke-width="6"/>
  <g font-family="Roboto,sans-serif" font-size="62" font-weight="700"><text x="474" y="189" fill="#3f3ddc">Z</text><text x="714" y="554" fill="#e02f35">X</text><text x="336" y="552" fill="#2eaf35">Y</text></g>
  <path d="M758 652l40 14-2 46-38 18-38-18V664z" fill="#fff" stroke="#333" stroke-width="4"/><path d="M722 664l36 14v50l-36-16z" fill="#aaa"/><path d="M758 678l38-12v46l-38 16z" fill="#d4d4d4"/>
  <path d="M838 681h34l-17 18z" fill="#333"/>
</svg>
</div>

<div class="sidebtns position-absolute d-flex flex-column">
  <button class="hold" aria-label="Appearance"><svg class="ic" viewBox="0 0 28 28"><g stroke="#333" stroke-width="1.400"><path d="M2 19L13 1l8 4-6 9z" fill="#777"/><path d="M8 17l15-10 5 8-6 6z" fill="#aaa"/><rect x="1" y="19" width="27" height="8" rx="1" fill="#fff"/><path d="M19 19h9v8h-9z" fill="#ddd"/><path d="M10 19v8"/><circle cx="5" cy="23" r="1.600" fill="#fff"/></g></svg></button>
  <button class="hold" aria-label="Configurations"><svg width="28" height="28" viewBox="0 0 28 28"><path d="M17 5l10 5v12l-10 5-10-5V10zM7 10l10 5 10-5M17 15v12" fill="#fff" stroke="#333" stroke-width="1.800"/><use href="#table" width="15" height="12" color="#1651b0"/></svg></button>
  <button class="hold" aria-label="Configured properties"><svg width="28" height="28" viewBox="0 0 28 28"><path d="M15 6l8 5v8l-8 4-8-4v-8zM7 11l8 4 8-4M15 15v8" fill="#fff" stroke="#333" stroke-width="1.800"/><path d="M6 12q-3 0-3 2t-3 2q3 0 3 3v5q0 3 4 3M22 3q4 0 4 3v6q0 2 3 3-3 0-3 3v5q0 3-4 4" fill="none" stroke="#333" stroke-width="1.800"/><use href="#table" width="15" height="12" color="#333"/></svg></button>
  <button class="hold" aria-label="Variables"><svg width="28" height="28" viewBox="0 0 28 28"><path d="M3 12q-3 8 2 14M25 4q5 10 0 22" fill="none" stroke="#333" stroke-width="2.600"/><path d="M8 19q3 1 5-3l3-5q2-3 6-3M14 10q3 1 3 5t4 5" fill="none" stroke="#333" stroke-width="2.800"/><circle cx="8.500" cy="19" r="2.300"/><circle cx="22" cy="9" r="2.300"/><use href="#table" width="15" height="12" color="#333"/></svg></button>
</div>

<div class="measures position-absolute d-flex">
  <button class="hold" aria-label="Measure"><svg width="24" height="20" viewBox="0 0 24 20"><path d="M1 10h10M8 5v5M1 10v9h16q6-1 6-6V6" fill="none" stroke="#333" stroke-width="1.800"/><ellipse cx="15.500" cy="6" rx="7.500" ry="5" fill="#ddd" stroke="#333" stroke-width="2"/><ellipse cx="15.500" cy="5.500" rx="3.500" ry="2" fill="#fff" stroke="#333" stroke-width="1.400"/><path d="M4 19v-3M7 19v-4M10 19v-3M13 19v-4M16 19v-3" stroke="#333" stroke-width="1.300"/></svg></button>
  <button class="hold" aria-label="Mass properties"><svg width="30" height="20" viewBox="0 0 30 20"><path d="M1 19v-4Q2 1 15 1t14 14v4z" fill="#ddd" stroke="#333" stroke-width="2"/><path d="M7 15Q8 7 15 7t8 8h-5q-1-2-3-2t-3 2z" fill="#fff" stroke="#333" stroke-width="1.800"/><path d="M4 13l2 .5M7 7l1.500 1.500M12 3.500l.5 2M18 3.500l-.5 2M23 7l-1.500 1.500M26 13l-2 .5" stroke="#333" stroke-width="1.500"/></svg></button>
  <button class="hold" aria-label="Balance"><svg width="22" height="22" viewBox="0 0 22 22"><path d="M4 1h14M11 1v17M5 1L1 13h6zM17 1l-3 12h7z" fill="none" stroke="#333" stroke-width="1.700"/><path d="M0 13h8v2H0zM14 13h8v2h-8zM0 18h22v3H0z" fill="#333"/></svg></button>
</div>
</main>
</div>

<!-- document tabs -->
<footer class="bottombar d-flex flex-shrink-0">
  <button class="addtab hold" aria-label="Insert new tab"><svg width="23" height="23" viewBox="0 0 23 23"><path d="M11.500 0v23M0 11.500h23" stroke="#666" stroke-width="4"/></svg></button>
  <a href="#" class="ptab d-flex align-items-center"><svg width="27" height="28" viewBox="0 0 27 28"><g fill="#fff" stroke="#333" stroke-width="1.800"><path d="M1 6h8l4 3v18H5l-4-4z"/><path d="M13 1h8l5 4v22h-8l-5-3z"/></g><path d="M1 6l5 4h7M6 10v17M13 1l5 5h8M18 6v21" fill="none" stroke="#555" stroke-width="1.300"/></svg><span style="margin-left:5px">Part Studio 1</span></a>
</footer>
</div>
</div>
<div class="edge flex-shrink-0"></div>
</body>
</html>
